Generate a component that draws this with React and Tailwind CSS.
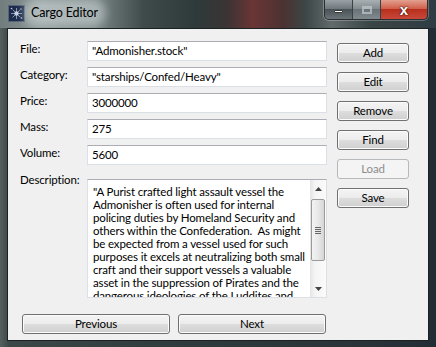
const fields = [
    { label: "File:", value: "\"Admonisher.stock\"" },
    { label: "Category:", value: "\"starships/Confed/Heavy\"" },
    { label: "Price:", value: "3000000" },
    { label: "Mass:", value: "275" },
    { label: "Volume:", value: "5600" },
];

const description_lines = [
    "\"A Purist crafted light assault vessel the",
    "Admonisher is often used for internal",
    "policing duties by Homeland Security and",
    "others within the Confederation.  As might",
    "be expected from a vessel used for such",
    "purposes it excels at neutralizing both small",
    "craft and their support vessels a valuable",
    "asset in the suppression of Pirates and the",
    "dangerous ideologies of the Luddites and",
];

const side_buttons = [
    { title: "Add" },
    { title: "Edit" },
    { title: "Remove" },
    { title: "Find" },
    { title: "Load", disabled: true },
    { title: "Save" },
];

function AppIcon() {
    return (
        <svg width="17" height="17" viewBox="0 0 17 17" aria-hidden="true">
            <rect x="0" y="0" width="17" height="17" fill="#1d2b4a" />
            <rect x="0.5" y="0.5" width="16" height="16" fill="none" stroke="#55647e" />
            <g stroke="#a9b6d0" strokeWidth="0.9" opacity="0.85">
                <path d="M8.5 3v11M3 8.5h11M4.6 4.6l7.8 7.8M12.4 4.6l-7.8 7.8" />
            </g>
            <circle cx="8.5" cy="8.5" r="2.2" fill="#d6def0" opacity="0.8" />
            <circle cx="3.5" cy="3.5" r="0.8" fill="#c0cbe0" />
            <circle cx="13.5" cy="13" r="0.8" fill="#c0cbe0" />
            <circle cx="13" cy="4" r="0.7" fill="#c0cbe0" />
        </svg>
    );
}

function WindowControls() {
    return (
        <div className="flex h-[20px] overflow-hidden rounded-b-[5px] border border-t-0 border-[#2a2f33] shadow-[0_0_0_1px_rgba(255,255,255,0.25)]">
            <div className="flex w-[28px] items-center justify-center border-r border-[#3a4044] bg-[linear-gradient(180deg,#9aa2a6_0%,#6f787c_45%,#4a5357_50%,#6a7479_100%)]">
                <div className="mt-[3px] h-[3px] w-[9px] rounded-[1px] border border-[#3a3a3a] bg-white" />
            </div>
            <div className="flex w-[28px] items-center justify-center border-r border-[#3a4044] bg-[linear-gradient(180deg,#a8b0b3_0%,#838c90_45%,#6a7478_50%,#808a8e_100%)]">
                <div className="h-[8px] w-[10px] border-2 border-t-[3px] border-[#c4cacc] opacity-70" />
            </div>
            <div className="flex w-[46px] items-center justify-center bg-[linear-gradient(180deg,#e3a08f_0%,#d0604c_45%,#b8301d_50%,#c9483a_100%)]">
                <span className="font-['Liberation_Sans',sans-serif] text-[15px] font-bold leading-none tracking-normal text-white [text-shadow:0_0_1px_#3a0a05,0_0_2px_#3a0a05]">
                    x
                </span>
            </div>
        </div>
    );
}

function TitleBar() {
    return (
        <div className="flex h-[28px] items-start bg-[linear-gradient(90deg,#717c7c_0%,#8c9696_10%,#7a8585_22%,#3f4b4b_33%,#2e3a3a_45%,#3b3434_52%,#6a3535_58%,#4c3232_65%,#3c4646_70%,#626b6b_76%,#3a4545_85%,#2f3c44_100%)]">
            <div className="ml-[8px] mt-[5px]">
                <AppIcon />
            </div>
            <div className="ml-[4px] mt-[5px] rounded-full bg-[rgba(225,232,232,0.45)] px-[2px] text-[12.5px] leading-[16px] text-black shadow-[0_0_8px_6px_rgba(225,232,232,0.45)]">
                Cargo Editor
            </div>
            <div className="flex-1" />
            <div className="mr-[8px]">
                <WindowControls />
            </div>
        </div>
    );
}

function AeroButton({ title, disabled = false, width = "w-[72px]" }) {
    return (
        <button
            type="button"
            disabled={disabled}
            className={`h-[20px] ${width} rounded-[3px] border text-[11.5px] leading-[16px] ${
                disabled
                    ? "border-[#b5b9bc] bg-[#f4f4f4] text-[#8d8d8d]"
                    : "border-[#707070] bg-[linear-gradient(180deg,#f4f4f4_0%,#ececec_48%,#dddddd_52%,#cfcfcf_100%)] text-black shadow-[inset_0_0_0_1px_#fbfbfb]"
            }`}
        >
            {title}
        </button>
    );
}

function TextBox({ value }) {
    return (
        <div className="h-[20px] w-[240px] border border-[#dbdfe6] border-t-[#abadb3] bg-white pl-[4px] text-[11.5px] leading-[18px] text-black">
            {value}
        </div>
    );
}

function ScrollBar() {
    return (
        <div className="flex w-[16px] flex-col bg-[linear-gradient(90deg,#e4e4e4_0%,#f4f4f4_30%,#fbfbfb_100%)]">
            <div className="flex h-[17px] items-center justify-center">
                <svg width="7" height="4" viewBox="0 0 7 4" aria-hidden="true">
                    <path d="M0 4L3.5 0L7 4Z" fill="#444" />
                </svg>
            </div>
            <div className="mx-[1px] mt-[2px] flex h-[62px] flex-col items-center justify-center gap-[1px] rounded-[2px] border border-[#9a9a9a] bg-[linear-gradient(90deg,#f3f3f3_0%,#e8e8e8_50%,#d6d6d6_100%)]">
                <div className="h-[1px] w-[6px] bg-[#666]" />
                <div className="h-[1px] w-[6px] bg-[#666]" />
                <div className="h-[1px] w-[6px] bg-[#666]" />
                <div className="h-[1px] w-[6px] bg-[#666]" />
            </div>
            <div className="flex-1" />
            <div className="flex h-[17px] items-center justify-center">
                <svg width="7" height="4" viewBox="0 0 7 4" aria-hidden="true">
                    <path d="M0 0L3.5 4L7 0Z" fill="#444" />
                </svg>
            </div>
        </div>
    );
}

function Description() {
    return (
        <div className="flex h-[119px] w-[240px] border border-[#dbdfe6] border-t-[#abadb3] bg-white">
            <div className="min-w-0 flex-1 overflow-hidden pl-[5px] pt-[5px] text-[11.5px] leading-[13px] text-black">
                {description_lines.map(line => (
                    <div key={line} className="whitespace-pre">
                        {line}
                    </div>
                ))}
            </div>
            <ScrollBar />
        </div>
    );
}

export default function App() {
    return (
        <div className="flex h-[347px] w-[436px] flex-col overflow-hidden bg-[linear-gradient(90deg,#55605f_0%,#3c4848_2%,#2f3b3c_40%,#2a3438_80%,#222c34_100%)] font-['Lato','Noto_Sans',sans-serif] tracking-[-0.15px]">
            <TitleBar />
            <div className="mx-[7px] flex flex-1 flex-col border border-[#1c2224] bg-[#f0f0f0]">
                <div className="flex pl-[12px] pt-[12px]">
                    <div className="flex w-[307px] flex-col">
                        <div className="flex flex-col gap-[6px]">
                            {fields.map(field => (
                                <div key={field.label} className="flex">
                                    <div className="w-[67px] text-[11.5px] leading-[15px] text-black">
                                        {field.label}
                                    </div>
                                    <TextBox value={field.value} />
                                </div>
                            ))}
                        </div>
                        <div className="mt-[14px] flex">
                            <div className="-mt-[7px] w-[67px] text-[11.5px] leading-[15px] text-black">
                                Description:
                            </div>
                            <Description />
                        </div>
                    </div>
                    <div className="ml-[10px] mt-[2px] flex flex-col gap-[9px]">
                        {side_buttons.map(button => (
                            <AeroButton key={button.title} title={button.title} disabled={button.disabled} />
                        ))}
                    </div>
                </div>
                <div className="mt-[16px] flex gap-[8px] pl-[14px]">
                    <AeroButton title="Previous" width="w-[148px]" />
                    <AeroButton title="Next" width="w-[148px]" />
                </div>
            </div>
            <div className="h-[6px]" />
        </div>
    );
}
